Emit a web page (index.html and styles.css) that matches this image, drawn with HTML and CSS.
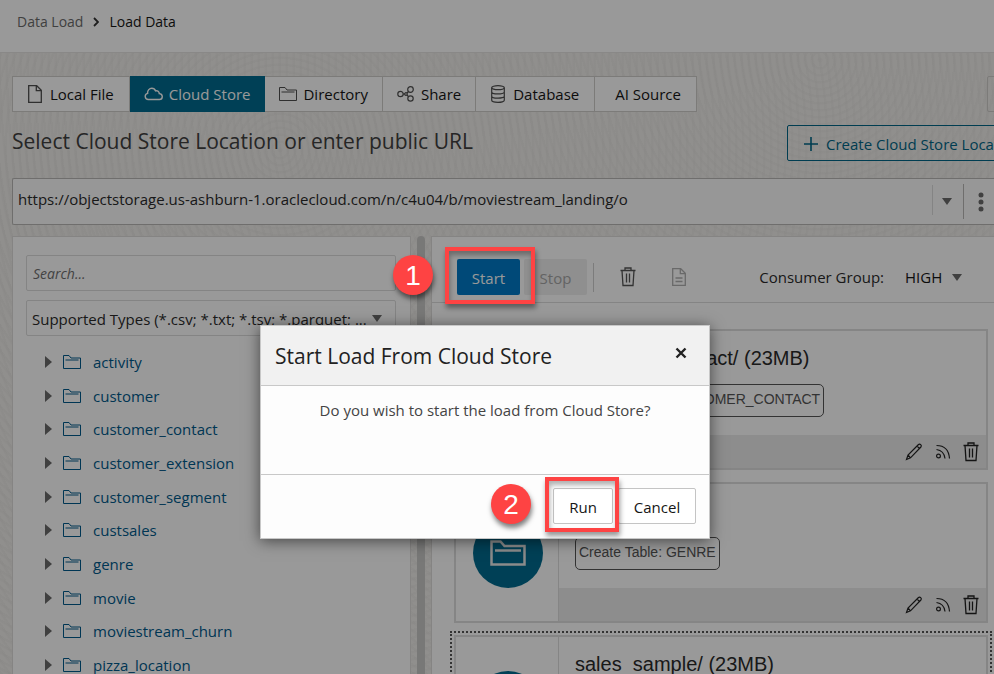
FILE: index.html
```
<!DOCTYPE html>
<html lang="en">
<head>
<meta charset="utf-8">
<meta name="viewport" content="width=device-width, initial-scale=1">
<title>Load Data</title>
<link rel="stylesheet" href="styles.css">
</head>
<body>
<svg class="sprite" aria-hidden="true">
  <symbol id="folder" viewBox="0 0 18 14"><path d="M.5 13.500V.5h5.500l2 2.500h9.500v10.500zM2.500 5h13" fill="none" stroke="currentColor"/></symbol>
  <symbol id="trash" viewBox="0 0 16 20"><path d="M.5 3.500h15M5 3.500v-2.500h6v2.500M2 3.500l1 15h10l1-15M6.500 6.500v9M9.500 6.500v9" fill="none" stroke="currentColor" stroke-width="1.300"/></symbol>
  <symbol id="pencil" viewBox="0 0 18 18"><path d="M1.500 16.500l1.500-4.500L13.500 1.500q1-1 2.200.2t.2 2.300L5.500 14.800zM12 3l2.800 2.800M3 12l2.500 2.800" fill="none" stroke="currentColor" stroke-width="1.200"/></symbol>
  <symbol id="feed" viewBox="0 0 16 16"><path d="M1.500 1.500q12 0 13 13M1.500 5.500q7.500 1 8.500 9" fill="none" stroke="currentColor" stroke-width="1.200"/><circle cx="3.500" cy="12" r="1.900" fill="none" stroke="currentColor" stroke-width="1.200"/></symbol>
  <symbol id="doc" viewBox="0 0 14 18"><path d="M.7.7h8l4.600 4.600v12H.7zM8.300.7v5h5" fill="none" stroke="currentColor" stroke-width="1.300"/></symbol>
  <symbol id="caret" viewBox="0 0 10 7"><path d="M0 0h10L5 7z" fill="currentColor"/></symbol>
</svg>

<div class="page">
  <header class="topbar">
    <nav class="crumbs" aria-label="Breadcrumb">
      <a href="#">Data Load</a>
      <svg class="chevron" viewBox="0 0 6 10" aria-hidden="true"><path d="M1 1l4 4-4 4" fill="none" stroke="currentColor" stroke-width="1.800"/></svg>
      <span class="current">Load Data</span>
    </nav>
  </header>

  <main class="content">
    <div class="row tabs-row">
      <div class="tabs">
        <button class="tab wide"><svg class="i-doc" aria-hidden="true"><use href="#doc"/></svg>Local File</button>
        <button class="tab active"><svg class="i-cloud" viewBox="0 0 20 14" aria-hidden="true"><path d="M4.500 12.800a3.300 3.300 0 0 1-.7-6.500c-.3-3.300 2-5.300 4.400-5.300 2 0 3.300 1 4 2.700 2-.6 3.800.7 3.900 2.900 4.300.3 4 6.200.1 6.200z" fill="none" stroke="currentColor" stroke-width="1.500"/></svg>Cloud Store</button>
        <button class="tab"><svg class="i-folder" aria-hidden="true"><use href="#folder"/></svg>Directory</button>
        <button class="tab"><svg class="i-share" viewBox="0 0 18 16" aria-hidden="true"><g fill="none" stroke="currentColor" stroke-width="1.200"><circle cx="3.500" cy="8" r="2.700"/><circle cx="13.500" cy="3.500" r="2.800"/><circle cx="13.500" cy="12.500" r="2.700"/><circle cx="9" cy="8" r="1.300"/><path d="M6 8h2M10 7l1.500-1.500M10 9l1.500 1.700"/></g></svg>Share</button>
        <button class="tab wide"><svg class="i-db" viewBox="0 0 14 18" aria-hidden="true"><g fill="none" stroke="currentColor" stroke-width="1.200"><ellipse cx="7" cy="2.700" rx="6.300" ry="2"/><path d="M.7 2.700v12.600c0 2.700 12.600 2.700 12.600 0V2.700M.7 7c0 2.600 12.600 2.600 12.600 0M.7 11.200c0 2.600 12.600 2.600 12.600 0"/></g></svg>Database</button>
        <button class="tab plain">AI Source</button>
      </div>
      <button class="edge-button" aria-label="More"></button>
    </div>

    <div class="row title-row">
      <h1>Select Cloud Store Location or enter public URL</h1>
      <button class="create"><svg class="i-plus" viewBox="0 0 14 14" aria-hidden="true"><path d="M7 0v14M0 7h14" stroke="currentColor" stroke-width="1.600"/></svg>Create Cloud Store Location</button>
    </div>

    <div class="urlbar">
      <input type="text" aria-label="Cloud store URL" value="https://objectstorage.us-ashburn-1.oraclecloud.com/n/c4u04/b/moviestream_landing/o">
      <button class="url-drop" aria-label="Show locations"><svg class="i-caret" aria-hidden="true"><use href="#caret"/></svg></button>
      <button class="kebab" aria-label="Actions"><svg viewBox="0 0 6 20" aria-hidden="true"><circle cx="3" cy="3" r="2.500"/><circle cx="3" cy="10" r="2.500"/><circle cx="3" cy="17" r="2.500"/></svg></button>
    </div>

    <div class="workspace">
      <section class="browser" aria-label="Objects">
        <input class="search" type="text" aria-label="Search" placeholder="Search...">
        <div class="types">
          <select aria-label="File types"><option>Supported Types (*.csv; *.txt; *.tsv; *.parquet; ...</option></select>
          <svg class="i-caret" aria-hidden="true"><use href="#caret"/></svg>
        </div>
        <ul class="tree">
          <li><i></i><svg class="i-folder" aria-hidden="true"><use href="#folder"/></svg><a href="#">activity</a></li>
          <li><i></i><svg class="i-folder" aria-hidden="true"><use href="#folder"/></svg><a href="#">customer</a></li>
          <li><i></i><svg class="i-folder" aria-hidden="true"><use href="#folder"/></svg><a href="#">customer_contact</a></li>
          <li><i></i><svg class="i-folder" aria-hidden="true"><use href="#folder"/></svg><a href="#">customer_extension</a></li>
          <li><i></i><svg class="i-folder" aria-hidden="true"><use href="#folder"/></svg><a href="#">customer_segment</a></li>
          <li><i></i><svg class="i-folder" aria-hidden="true"><use href="#folder"/></svg><a href="#">custsales</a></li>
          <li><i></i><svg class="i-folder" aria-hidden="true"><use href="#folder"/></svg><a href="#">genre</a></li>
          <li><i></i><svg class="i-folder" aria-hidden="true"><use href="#folder"/></svg><a href="#">movie</a></li>
          <li><i></i><svg class="i-folder" aria-hidden="true"><use href="#folder"/></svg><a href="#">moviestream_churn</a></li>
          <li><i></i><svg class="i-folder" aria-hidden="true"><use href="#folder"/></svg><a href="#">pizza_location</a></li>
        </ul>
      </section>
      <div class="splitter"></div>
      <section class="cart" aria-label="Load cart">
        <div class="cart-bar">
          <button class="start">Start</button>
          <button class="stop" disabled>Stop</button>
          <span class="rule"></span>
          <button class="icon-button" aria-label="Remove all"><svg class="i-trash" aria-hidden="true"><use href="#trash"/></svg></button>
          <button class="icon-button faded" aria-label="Report" disabled><svg class="i-report" viewBox="0 0 14 18" aria-hidden="true"><path d="M.7.7h8l4.600 4.600v12H.7zM8.300.7v5h5M3.500 10h7M3.500 13.500h7" fill="none" stroke="currentColor" stroke-width="1.300"/></svg></button>
          <label for="group">Consumer Group:</label>
          <div class="group"><select id="group"><option>HIGH</option></select><svg class="i-caret" aria-hidden="true"><use href="#caret"/></svg></div>
        </div>
        <div class="cards">
          <article class="card">
            <div class="card-side"><span class="disc"><svg viewBox="0 0 36 26" aria-hidden="true"><path d="M1.500 24.500V1.500h9l4 4.500h20v18.500zM5 10.500h26" fill="none" stroke="currentColor" stroke-width="2.500"/></svg></span></div>
            <div class="card-main">
              <div class="card-text"><h2>customer_contact/ (23MB)</h2><span class="tag">Create Table: CUSTOMER_CONTACT</span></div>
              <div class="card-foot">
                <button aria-label="Edit"><svg class="i-pencil" aria-hidden="true"><use href="#pencil"/></svg></button>
                <button aria-label="Feed"><svg class="i-feed" aria-hidden="true"><use href="#feed"/></svg></button>
                <button aria-label="Delete"><svg class="i-trash" aria-hidden="true"><use href="#trash"/></svg></button>
              </div>
            </div>
          </article>
          <article class="card">
            <div class="card-side"><span class="disc"><svg viewBox="0 0 36 26" aria-hidden="true"><path d="M1.500 24.500V1.500h9l4 4.500h20v18.500zM5 10.500h26" fill="none" stroke="currentColor" stroke-width="2.500"/></svg></span></div>
            <div class="card-main">
              <div class="card-text"><h2>genre/ (23MB)</h2><span class="tag">Create Table: GENRE</span></div>
              <div class="card-foot">
                <button aria-label="Edit"><svg class="i-pencil" aria-hidden="true"><use href="#pencil"/></svg></button>
                <button aria-label="Feed"><svg class="i-feed" aria-hidden="true"><use href="#feed"/></svg></button>
                <button aria-label="Delete"><svg class="i-trash" aria-hidden="true"><use href="#trash"/></svg></button>
              </div>
            </div>
          </article>
          <article class="card focused">
            <div class="card-side"><span class="disc"></span></div>
            <div class="card-main">
              <div class="card-text"><h2>sales_sample/ (23MB)</h2></div>
            </div>
          </article>
        </div>
      </section>
    </div>
  </main>
</div>

<div class="scrim"></div>

<section class="dialog" role="dialog" aria-labelledby="dialog-title">
  <header class="dialog-head">
    <h2 id="dialog-title">Start Load From Cloud Store</h2>
    <button class="close" aria-label="Close"><svg viewBox="0 0 12 12" aria-hidden="true"><path d="M1.500 1.500l9 9M10.500 1.500l-9 9" stroke="currentColor" stroke-width="2.400"/></svg></button>
  </header>
  <p class="dialog-body">Do you wish to start the load from Cloud Store?</p>
  <footer class="dialog-foot">
    <button class="run">Run</button>
    <button>Cancel</button>
  </footer>
</section>

<div class="frame frame-start"></div>
<div class="frame frame-run"></div>
<span class="step step-one">1</span>
<span class="step step-two">2</span>
</body>
</html>
```
FILE: styles.css
```
* { box-sizing: border-box; }

body {
  margin: 0;
  height: 100vh;
  overflow: hidden;
  position: relative;
  font-family: "Open Sans", "Noto Sans", sans-serif;
  font-size: 15px;
  line-height: 20px;
  color: #2b2b2b;
}

button, input, select {
  font: inherit;
  color: inherit;
  margin: 0;
}

button {
  display: flex;
  align-items: center;
  justify-content: center;
  padding: 0;
  background: none;
  border: 0;
}

svg { display: block; flex: none; }
a { text-decoration: none; color: inherit; }
h1, h2, p, ul { margin: 0; padding: 0; font-weight: 400; }

.sprite { position: absolute; width: 0; height: 0; }
.i-doc { width: 14px; height: 18px; }
.i-cloud { width: 19px; height: 14px; }
.i-folder { width: 18px; height: 14px; }
.i-share { width: 18px; height: 16px; }
.i-db { width: 14px; height: 18px; }
.i-plus { width: 14px; height: 14px; }
.i-caret { width: 10px; height: 7px; color: #6b6b6b; }
.i-trash { width: 16px; height: 20px; }
.i-report { width: 14px; height: 18px; }
.i-pencil { width: 18px; height: 18px; }
.i-feed { width: 16px; height: 16px; }

.page {
  height: 100%;
  display: flex;
  flex-direction: column;
  overflow: hidden;
  background:
    repeating-radial-gradient(circle at 280px 150px, rgba(0, 0, 0, .015) 0 2px, transparent 3px 7px),
    repeating-radial-gradient(circle at 820px 60px, rgba(0, 0, 0, .015) 0 2px, transparent 3px 7px),
    #f0eeeb;
}

.topbar {
  flex: none;
  height: 53px;
  padding: 12px 17px;
  background: #fff;
  border-bottom: 1px solid #e4e3e1;
}

.crumbs { display: flex; align-items: center; font-size: 14px; color: #6b6b6b; }
.chevron { width: 6px; height: 10px; margin: 0 10px; color: #333; }
.current { color: #161616; }

.content {
  flex: 1;
  min-height: 0;
  display: flex;
  flex-direction: column;
  padding: 23px 0 0 12px;
}

.row { display: flex; justify-content: space-between; flex: none; }
.tabs-row { margin-right: -30px; }
.tabs { display: flex; border: 1px solid #cfcdca; background: #fff; }

.tab {
  height: 34px;
  padding: 0 14px;
  gap: 6px;
  color: #161616;
  border-right: 1px solid #cfcdca;
}
.tab:last-child { border-right: 0; }
.tab svg { color: #4f4f4f; }
.tab.wide { padding: 0 15px; gap: 8px; }
.tab.plain { padding: 0 15px 0 20px; }
.tab.active { height: 36px; margin: -1px 0; background: #006c8f; color: #fff; border-color: #006c8f; }
.tab.active svg { color: #fff; }

.edge-button { width: 37px; border: 1px solid #cfcdca; border-radius: 2px; }

.title-row { margin: 13px -30px 0 0; }
h1 { font-size: 21px; line-height: 32px; color: #404040; }

.create {
  width: 237px;
  height: 36px;
  gap: 8px;
  padding: 2px 0 0 16px;
  justify-content: flex-start;
  white-space: nowrap;
  color: #006687;
  border: 1px solid #006687;
  border-radius: 2px;
}

.urlbar {
  flex: none;
  display: flex;
  align-items: center;
  height: 47px;
  margin-top: 17px;
  background: #fcfcfc;
  border: 1px solid #b9b8b6;
  border-right: 0;
  border-radius: 2px 0 0 2px;
}
.urlbar input {
  flex: 1;
  min-width: 0;
  height: 40px;
  padding: 0 5px 6px;
  border: 0;
  background: none;
}
.url-drop { width: 31px; height: 30px; margin-bottom: 4px; padding: 4px 2px 0 0; border-left: 1px solid #dcdcdc; }
.kebab { width: 31px; height: 35px; padding-left: 4px; border-left: 1px solid #b9b8b6; }
.kebab svg { width: 6px; height: 20px; fill: #6b6b6b; }

.workspace { flex: 1; min-height: 0; display: flex; margin-top: 11px; }

.browser {
  flex: 0 0 399px;
  min-width: 0;
  padding: 18px 14px 0 13px;
  background: #fff;
  border: 1px solid #dedddb;
  border-bottom: 0;
}
.search, .types {
  display: flex;
  align-items: center;
  width: 100%;
  height: 36px;
  border: 1px solid #dcdcdc;
  border-radius: 2px;
  background: #fff;
}
.search { padding: 0 6px; font-size: 14px; }
.search::placeholder { font-style: italic; color: #6f6f6f; opacity: 1; }
.types { margin-top: 9px; padding-right: 13px; }
select { appearance: none; border: 0; background: none; }
.types select { flex: 1; min-width: 0; padding: 1px 0 0 5px; }

.tree {
  list-style: none;
  display: grid;
  grid-auto-rows: 1fr;
  height: 337px;
  margin-top: 9px;
  padding-left: 19px;
}
.tree li { display: flex; align-items: center; color: #005a8c; }
.tree i { border-left: 7px solid #6b6b6b; border-top: 6px solid transparent; border-bottom: 6px solid transparent; }
.tree svg { margin: 0 12px 0 11px; }

.splitter { flex: none; width: 8px; margin: 0 6px; border-radius: 4px 4px 0 0; background: #c9c8c7; }

.cart { flex: 1; min-width: 0; background: #fff; border: 1px solid #dedddb; border-width: 1px 0 0 1px; }
.cart-bar {
  display: flex;
  align-items: center;
  height: 66px;
  padding: 15px 32px 0 25px;
  border-bottom: 1px solid #dcdcdc;
}
.start, .stop { width: 63px; height: 36px; padding-top: 2px; border-radius: 2px; }
.start { background: #007bc8; color: #fff; }
.stop { margin-left: 4px; background: #eeeeee; color: #a6a6a6; }
.rule { width: 1px; height: 29px; margin: 0 26px 0 6px; background: #cfcfcf; }
.icon-button { color: #555; }
.icon-button.faded { margin: 0 auto 0 36px; color: #b0b0b0; }
.group { display: flex; align-items: center; margin-left: 21px; color: #161616; }
.group select { padding: 0; width: 47px; }

.cards { display: flex; flex-direction: column; gap: 12px; padding: 26px 6px 0 22px; }
.card { flex: none; display: flex; height: 141px; border: 2px solid #dedede; background: #fff; }
.card.focused { outline: 2px dotted #555; outline-offset: 2px; }
.card-side {
  flex: 0 0 103px;
  display: grid;
  place-items: center;
  padding-left: 1px;
  border-right: 1px solid #dedede;
}
.disc { display: grid; place-items: center; width: 70px; height: 70px; border-radius: 50%; background: #006c8f; color: #e8e8e8; }
.disc svg { width: 36px; height: 26px; }
.card-main { flex: 1; display: flex; flex-direction: column; font-family: "Liberation Sans", sans-serif; }
.card-text { flex: 1; padding: 15px 16px 0; }
.card-text h2 { font-size: 20px; line-height: 24px; }
.tag {
  display: inline-block;
  height: 33px;
  margin-top: 14px;
  padding: 0 3px;
  line-height: 28px;
  font-size: 14px;
  color: #555;
  border: 1px solid #555;
  border-radius: 5px;
}
.card-foot { display: flex; align-items: center; justify-content: flex-end; gap: 12px; height: 33px; padding-right: 7px; background: #ebebeb; color: #222; }

.scrim { position: absolute; inset: 0; background: rgba(0, 0, 0, .4); }

.dialog {
  position: absolute;
  top: 325px;
  left: 260px;
  width: 450px;
  background: #fdfdfd;
  border: 1px solid #c8c8c8;
  box-shadow: 0 2px 14px rgba(0, 0, 0, .55);
}
.dialog-head {
  display: flex;
  align-items: center;
  justify-content: space-between;
  height: 60px;
  padding: 0 22px 0 14px;
  background: #f1f1f1;
  border-bottom: 1px solid #c8c8c8;
}
.dialog-head h2 { font-size: 21px; line-height: 28px; color: #222; }
.close { color: #222; padding-bottom: 5px; }
.close svg { width: 12px; height: 12px; }
.dialog-body { height: 89px; padding-top: 14px; text-align: center; color: #444; border-bottom: 1px solid #c8c8c8; }
.dialog-foot { display: flex; justify-content: flex-end; gap: 5px; padding: 13px 13px 14px; }
.dialog-foot button { width: 78px; height: 36px; padding-top: 2px; background: #fff; border: 1px solid #c4c4c4; border-radius: 2px; color: #161616; }
.dialog-foot .run { width: 60px; }

.frame {
  position: absolute;
  border: 4px solid #fe4343;
  box-shadow: 1px 4px 5px rgba(0, 0, 0, .4), inset 1px 4px 5px rgba(0, 0, 0, .3);
}
.frame-start { left: 445px; top: 247px; width: 90px; height: 57px; }
.frame-run { left: 545px; top: 477px; width: 74px; height: 55px; }
.step {
  position: absolute;
  width: 40px;
  height: 40px;
  border-radius: 50%;
  background: #fe4343;
  color: #fff;
  font: 28px/42px "Liberation Sans", sans-serif;
  text-align: center;
  box-shadow: 1px 4px 5px rgba(0, 0, 0, .5);
}
.step-one { left: 393px; top: 255px; }
.step-two { left: 491px; top: 484px; }
```
